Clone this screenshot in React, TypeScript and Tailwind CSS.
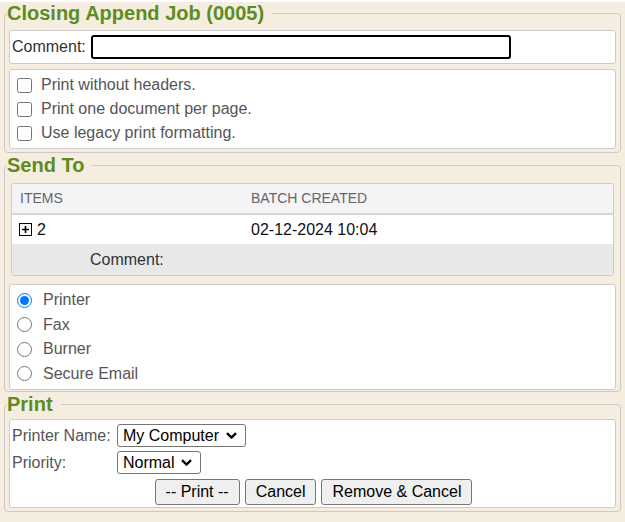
import { useState } from "react";

const PlusBox = () => (
  <svg width="13" height="13" viewBox="0 0 13 13" className="shrink-0">
    <rect x="0.5" y="0.5" width="12" height="12" fill="white" stroke="black" strokeWidth="1" />
    <path d="M3 6.5h7M6.5 3v7" stroke="black" strokeWidth="1.6" />
  </svg>
);

const Chevron = () => (
  <svg width="11" height="7" viewBox="0 0 11 7" className="shrink-0">
    <path d="M1 1.2l4.5 4.3 4.5-4.3" fill="none" stroke="black" strokeWidth="2.4" />
  </svg>
);

const FakeSelect = ({ value, width }: { value: string; width: string }) => (
  <div
    className={`${width} h-[23px] flex items-center gap-[5px] pl-[5px] pr-[8px] border border-[#767676] rounded-[3px] bg-white text-black cursor-default`}
  >
    <span className="flex-1 leading-none whitespace-nowrap">{value}</span>
    <Chevron />
  </div>
);

const Legend = ({ children }: { children: React.ReactNode }) => (
  <legend className="ml-[-2px] pr-[8px] text-[20px] leading-[23px] font-bold text-[#5e8b22]">{children}</legend>
);

export default function App() {
  const [sendTo, setSendTo] = useState("printer");
  const [opts, setOpts] = useState([false, false, false]);

  const options = ["Print without headers.", "Print one document per page.", "Use legacy print formatting."];
  const targets = [
    { id: "printer", label: "Printer" },
    { id: "fax", label: "Fax" },
    { id: "burner", label: "Burner" },
    { id: "secure", label: "Secure Email" },
  ];

  return (
    <div className="min-h-screen bg-[#f5eddf] px-[4px] font-['Liberation_Sans',Arial,sans-serif] text-[16px] text-[#555]">
      {/* Job */}
      <fieldset className="mt-[2px] border border-[#cdcac3] rounded-[4px] px-[4px] pt-[5px] pb-[3px]">
        <Legend>Closing Append Job (0005)</Legend>
        <div className="flex items-center h-[34px] bg-white border border-[#cccccc] rounded-[3px] pl-[2px] text-[#333]">
          <span>Comment:</span>
          <input
            type="text"
            className="ml-[5px] w-[420px] h-[24px] border-2 border-black rounded-[3px] bg-white px-[2px] outline-none"
          />
        </div>
        <div className="mt-[5px] bg-white border border-[#cccccc] rounded-[3px] pl-[7px] py-[3px]">
          {options.map((o, i) => (
            <label key={o} className="flex items-center gap-[9px] h-[24px]">
              <input
                type="checkbox"
                checked={opts[i]}
                onChange={() => setOpts(opts.map((v, j) => (j === i ? !v : v)))}
                className="w-[15px] h-[15px] m-0"
              />
              <span>{o}</span>
            </label>
          ))}
        </div>
      </fieldset>

      {/* Send To */}
      <fieldset className="mt-[1px] border border-[#cdcac3] rounded-[4px] px-[4px] pt-[6px] pb-[1px]">
        <Legend>Send To</Legend>
        <div className="mx-[2px] border border-[#cccccc] rounded-[3px] overflow-hidden bg-white">
          <div className="flex items-center h-[31px] bg-[#f4f4f6] border-b-2 border-[#d6d6d6] text-[14px] text-[#666]">
            <span className="w-[239px] pl-[8px]">ITEMS</span>
            <span>BATCH CREATED</span>
          </div>
          <div className="flex items-center h-[29px] text-[#111]">
            <span className="w-[239px] pl-[7px] flex items-center gap-[5px]">
              <PlusBox />
              <span>2</span>
            </span>
            <span>02-12-2024 10:04</span>
          </div>
          <div className="flex items-center h-[31px] bg-[#e8e8e8] pl-[78px] text-[#333]">Comment:</div>
        </div>
        <div className="mt-[8px] bg-white border border-[#cccccc] rounded-[3px] pl-[7px] py-[3px]">
          {targets.map((t) => (
            <label key={t.id} className="flex items-center gap-[11px] h-[24.5px]">
              <input
                type="radio"
                name="sendto"
                checked={sendTo === t.id}
                onChange={() => setSendTo(t.id)}
                className="w-[15px] h-[15px] m-0"
              />
              <span>{t.label}</span>
            </label>
          ))}
        </div>
      </fieldset>

      {/* Print */}
      <fieldset className="mt-[1px] border border-[#cdcac3] rounded-[4px] px-[4px] pt-[3px] pb-[3px]">
        <Legend>Print</Legend>
        <div className="bg-white border border-[#cccccc] rounded-[3px] pl-[2px] pt-[4px] pb-[2px]">
          <div className="flex items-center h-[23px]">
            <span className="w-[105px]">Printer Name:</span>
            <FakeSelect value="My Computer" width="w-[129px]" />
          </div>
          <div className="flex items-center h-[23px] mt-[4px]">
            <span className="w-[105px]">Priority:</span>
            <FakeSelect value="Normal" width="w-[84px]" />
          </div>
          <div className="flex justify-center gap-[5px] mt-[5px] text-black">
            {["-- Print --", "Cancel", "Remove & Cancel"].map((b) => (
              <button
                key={b}
                className="h-[26px] px-[10px] bg-[#efefef] border border-[#767676] rounded-[3px] hover:bg-[#e5e5e5]"
              >
                {b}
              </button>
            ))}
          </div>
        </div>
      </fieldset>
    </div>
  );
}
